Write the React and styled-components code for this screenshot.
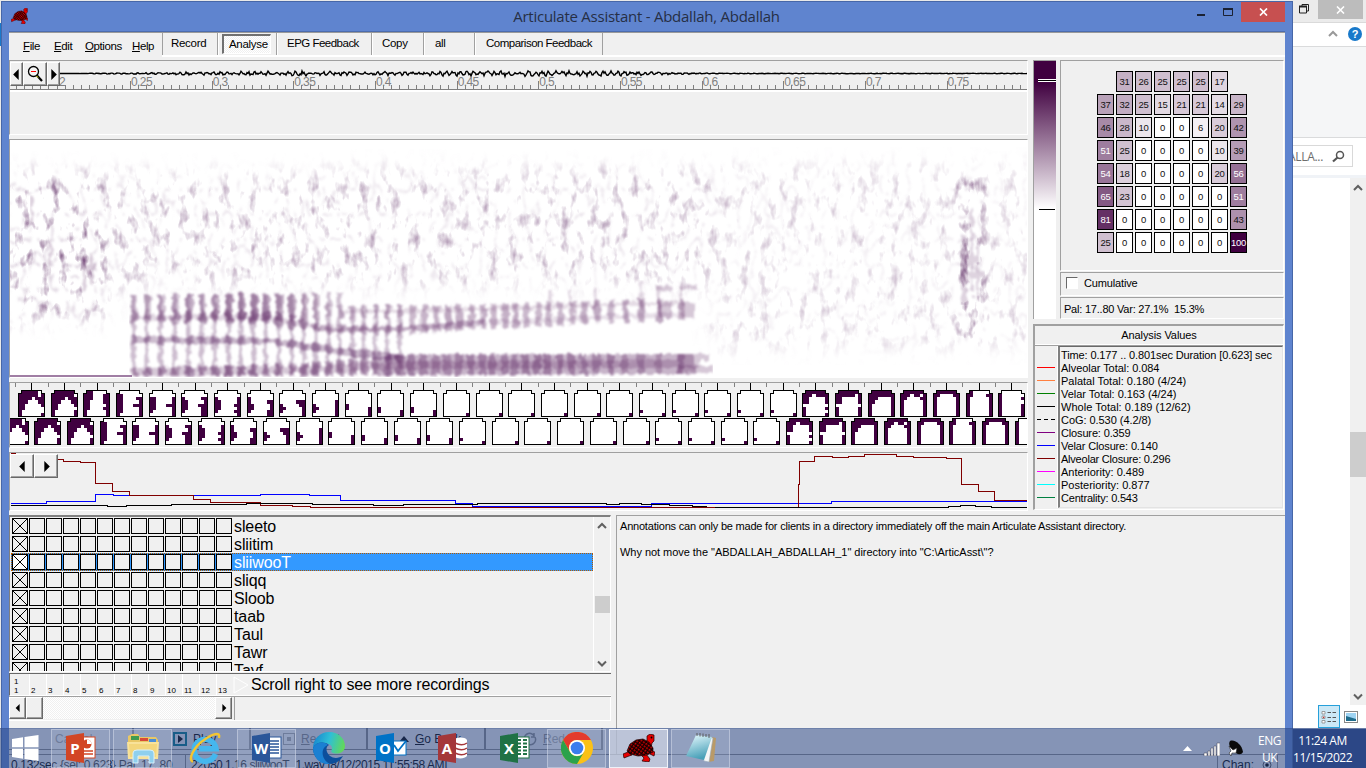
import React from "react";
import styled, { createGlobalStyle, css } from "styled-components";

const Global = createGlobalStyle`
  * { box-sizing: border-box; }
  html, body { margin: 0; padding: 0; overflow: hidden; }
  body { font-family: "Liberation Sans", Arial, sans-serif; font-size: 11px; color: #000; }
  svg { display: block; flex: none; }
`;

/* ---------- helpers ---------- */
const rng = (seed) => {
  let s = seed;
  return () => {
    s = (s * 1664525 + 1013904223) % 4294967296;
    return s / 4294967296;
  };
};
const lerp = (pts, x) => {
  if (x <= pts[0][0]) return pts[0][1];
  for (let i = 1; i < pts.length; i++) {
    if (x <= pts[i][0]) {
      const [x0, y0] = pts[i - 1];
      const [x1, y1] = pts[i];
      return y0 + ((y1 - y0) * (x - x0)) / (x1 - x0);
    }
  }
  return pts[pts.length - 1][1];
};

/* ---------- desktop and windows ---------- */
const Desktop = styled.div`
  position: relative;
  width: 1366px;
  height: 768px;
  overflow: hidden;
  background: #e9e9e9;
`;
const BackWindow = styled.div`
  position: absolute;
  left: 1293px;
  top: 0;
  width: 73px;
  height: 728px;
  background: #fff;
  display: flex;
  flex-direction: column;
`;
const BackTitle = styled.div`
  height: 23px;
  background: #ebebeb;
  border-bottom: 1px solid #dadada;
  display: flex;
  justify-content: space-between;
  padding: 0 3px 0 5px;
`;
const GreyClose = styled.div`
  width: 45px;
  height: 19px;
  background: #bcbcbc;
  display: flex;
  align-items: center;
  justify-content: center;
`;
const BackTabs = styled.div`
  height: 24px;
  border-bottom: 1px solid #dadbdc;
  display: flex;
  align-items: center;
  justify-content: flex-end;
  gap: 10px;
  padding-right: 4px;
`;
const BackRibbon = styled.div`
  height: 92px;
  background: #f5f6f7;
  border-bottom: 1px solid #dadbdc;
`;
const SearchRow = styled.div`
  height: 37px;
  padding: 7px 13px 8px 0;
`;
const SearchBox = styled.div`
  height: 22px;
  border: 1px solid #d9d9d9;
  border-left: 0;
  display: flex;
  align-items: center;
  justify-content: space-between;
  padding-right: 7px;
  font: 12px "Open Sans", sans-serif;
  letter-spacing: -0.3px;
  color: #6d6d6d;
  overflow: hidden;
`;
const SearchText = styled.span`
  margin-left: -5px;
`;
const BackBody = styled.div`
  flex: 1;
  border-top: 3px solid #f0f3f7;
  display: flex;
  flex-direction: column;
`;
const BackScroll = styled.div`
  align-self: flex-end;
  width: 16px;
  height: 527px;
  background: #f0f0f0;
  display: flex;
  flex-direction: column;
  align-items: center;
  justify-content: space-between;
  padding: 6px 0 4px;
`;
const BackThumb = styled.div`
  width: 16px;
  height: 45px;
  margin-top: 24px;
  background: #cdcdcd;
`;
const ViewRow = styled.div`
  display: flex;
  align-items: center;
  gap: 4px;
  padding-left: 25px;
`;
const ViewButton = styled.div`
  width: 22px;
  height: 23px;
  background: #cbe8f6;
  border: 1px solid #26a0da;
  display: flex;
  align-items: center;
  justify-content: center;
`;
const LeftSliver = styled.div`
  position: absolute;
  left: 0;
  top: 23px;
  width: 1px;
  height: 23px;
  background: #1979ca;
`;

const AppWindow = styled.div`
  position: absolute;
  left: 1px;
  top: 1px;
  width: 1292px;
  height: 767px;
  background: #5f84cf;
  border: 1px solid #4767a8;
  border-bottom: 0;
  padding: 0 7px;
`;
const TitleBar = styled.div`
  height: 30px;
  display: flex;
  position: relative;
  justify-content: center;
  border-bottom: 1px solid #4c6cae;
`;
const TitleText = styled.div`
  font: 15px/28px "Open Sans", sans-serif;
  color: #262f45;
  white-space: nowrap;
  letter-spacing: -0.25px;
  padding-right: 1px;
`;
const TitleIcon = styled.div`
  position: absolute;
  left: 2px;
  top: 6px;
`;
const WinButtons = styled.div`
  position: absolute;
  right: 0;
  top: 0;
  display: flex;
  gap: 3px;
`;
const CloseButton = styled.div`
  width: 44px;
  height: 20px;
  background: #c75050;
  display: flex;
  align-items: center;
  justify-content: center;
`;
const Client = styled.div`
  height: 736px;
  width: 1276px;
  background: #f0f0f0;
  border-top: 1px solid #9a9a9a;
  display: flex;
  flex-direction: column;
`;

/* ---------- menu ---------- */
const MenuBar = styled.div`
  height: 27px;
  flex: none;
  display: flex;
`;
const Menus = styled.div`
  width: 153px;
  padding: 6px 0 0 14px;
  display: flex;
  font-size: 11.5px;
  letter-spacing: -0.4px;
  line-height: 14px;
`;
const MenuItem = styled.span`
  width: ${(p) => p.$w}px;
  white-space: nowrap;
`;
const Tabs = styled.div`
  flex: 1;
  height: 24px;
  border-bottom: 2px solid #fff;
  display: flex;
`;
const Tab = styled.div`
  width: ${(p) => p.$w}px;
  height: 22px;
  border-left: 1px solid ${(p) => (p.$first ? "#a0a0a0" : "#fff")};
  border-right: 1px solid #a0a0a0;
  padding: ${(p) => (p.$down ? "1px 4px 0 3px" : `3px 0 0 ${p.$pad}px`)};
  font-size: 11.5px;
  letter-spacing: ${(p) => (p.$tight ? -0.51 : -0.3)}px;
  line-height: 15px;
  white-space: nowrap;
`;
const Pressed = styled.div`
  width: 49px;
  height: 20px;
  background: repeating-conic-gradient(#fff 0 25%, #f0f0f0 0 50%) 0 0 / 2px 2px;
  border: 1px solid #fff;
  border-top: 2px solid #707070;
  border-left: 2px solid #707070;
  padding: 1px 0 0 5px;
`;

/* ---------- work area ---------- */
const Upper = styled.div`
  height: 455px;
  flex: none;
  display: flex;
  gap: 5px;
`;
const LeftCol = styled.div`
  width: 1019px;
  display: flex;
  flex-direction: column;
`;
const Panel = styled.div`
  border-top: 1px solid #a0a0a0;
  border-left: 1px solid #a0a0a0;
  border-right: 1px solid #fff;
  border-bottom: 1px solid #fff;
  height: ${(p) => p.$h}px;
  margin-bottom: ${(p) => p.$gap || 0}px;
  background: ${(p) => p.$bg || "#f0f0f0"};
  overflow: hidden;
  flex: none;
  position: relative;
`;
const Overlay = styled.div`
  position: absolute;
  left: 0;
  top: ${(p) => p.$top}px;
  display: flex;
  background: #f0f0f0;
  z-index: 1;
`;
const PushButton = styled.div`
  width: ${(p) => p.$w}px;
  height: ${(p) => p.$h}px;
  background: #f0f0f0;
  border: 1px solid #fff;
  border-right-color: #696969;
  border-bottom-color: #696969;
  box-shadow: inset -1px -1px 0 #a0a0a0;
  display: flex;
  align-items: center;
  justify-content: center;
`;
const RightCol = styled.div`
  width: 251px;
  display: flex;
  flex-direction: column;
`;
const RightTop = styled.div`
  display: flex;
  gap: 4px;
  height: 260px;
  margin-bottom: 4px;
`;
const ColourBar = styled.div`
  width: 23px;
  height: 259px;
  border-top: 1px solid #a0a0a0;
  border-left: 1px solid #a0a0a0;
  background: linear-gradient(#400040 0 21px, #fff 148px);
  padding: 18px 0 0 4px;
`;
const BarHandle = styled.div`
  height: 3px;
  background: #000;
  border-top: 1px solid #fff;
  border-bottom: 1px solid #fff;
`;
const BarLine = styled.div`
  height: 1px;
  margin: 127px 1px 0 1px;
  background: #000;
`;
const RightStack = styled.div`
  width: 224px;
  display: flex;
  flex-direction: column;
`;
const EpgGrid = styled.div`
  display: grid;
  grid-template-columns: repeat(8, 17px);
  grid-auto-rows: 21px;
  gap: 2px;
  padding: 10px 0 0 36px;
`;
const EpgCell = styled.div`
  border: 1px solid #000;
  background: ${(p) => p.$bg};
  color: ${(p) => (p.$light ? "#fff" : "#111")};
  font-size: 9.5px;
  line-height: 19px;
  letter-spacing: -0.2px;
  text-align: center;
  display: flex;
  justify-content: center;
  white-space: nowrap;
`;
const CheckLine = styled.div`
  display: flex;
  align-items: center;
  gap: 6px;
  height: 20px;
  padding-left: 5px;
  letter-spacing: -0.15px;
`;
const CheckBox = styled.span`
  width: 12px;
  height: 12px;
  background: #fff;
  border: 1px solid #fff;
  border-top-color: #696969;
  border-left-color: #696969;
`;
const PalLine = styled.div`
  padding: 4px 0 0 3px;
  line-height: 14px;
  letter-spacing: -0.22px;
  white-space: pre;
`;
const Analysis = styled.div`
  height: 186px;
  border-top: 2px solid #a0a0a0;
  border-left: 2px solid #a0a0a0;
  border-right: 1px solid #fff;
  border-bottom: 1px solid #fff;
`;
const AnalysisTitle = styled.div`
  height: 19px;
  text-align: center;
  line-height: 19px;
  letter-spacing: -0.1px;
  border-bottom: 1px solid #fff;
`;
const AnalysisBody = styled.div`
  display: flex;
  height: 163px;
  border-top: 1px solid #a0a0a0;
`;
const Legend = styled.div`
  width: 23px;
  padding: 21px 0 0 2px;
  display: flex;
  flex-direction: column;
  gap: 12px;
  border-right: 1px solid #fff;
`;
const Swatch = styled.div`
  width: 18px;
  height: 1px;
  flex: none;
  background: ${(p) =>
    p.$dash ? "repeating-linear-gradient(90deg, #000 0 4px, transparent 4px 7px)" : p.$c};
`;
const Values = styled.div`
  flex: 1;
  border-top: 1px solid #696969;
  border-left: 2px solid #808080;
  border-right: 1px solid #e3e3e3;
  border-bottom: 1px solid #e3e3e3;
  padding: 2px 0 0 1px;
  line-height: 13px;
  white-space: nowrap;
`;
const ValueLine = styled.div`
  height: 13px;
  letter-spacing: ${(p) => p.$ls || 0}px;
`;

/* ---------- lower area ---------- */
const Lower = styled.div`
  height: 239px;
  flex: none;
  display: flex;
  gap: 5px;
`;
const ListSide = styled.div`
  width: 602px;
  display: flex;
  flex-direction: column;
`;
const ListBox = styled.div`
  height: 157px;
  border-top: 2px solid #808080;
  border-left: 1px solid #808080;
  border-right: 1px solid #fff;
  border-bottom: 1px solid #fff;
  padding-left: 1px;
  display: flex;
  overflow: hidden;
`;
const Rows = styled.div`
  width: 582px;
  overflow: hidden;
`;
const Row = styled.div`
  height: 18px;
  display: flex;
  align-items: center;
  background: ${(p) => (p.$on ? "#3399ff" : "none")};
  color: ${(p) => (p.$on ? "#fff" : "#000")};
  font-size: 16px;
  line-height: 18px;
  padding-left: 1px;
  ${(p) =>
    p.$on &&
    css`
      outline: 1px dotted #b35a00;
      outline-offset: -1px;
    `}
`;
const Tick = styled.span`
  width: 16px;
  height: 16px;
  margin-right: 1px;
  border: 1px solid #000;
  background: ${(p) => (p.$bright ? "#fff" : "#f0f0f0")};
  flex: none;
`;
const RowName = styled.span`
  padding: 1px 0 0 1px;
  letter-spacing: -0.1px;
  white-space: nowrap;
`;
const ListScroll = styled.div`
  width: 17px;
  border-left: 1px solid #fff;
  padding: 5px 0 3px;
  display: flex;
  flex-direction: column;
  justify-content: space-between;
  align-items: center;
`;
const ListThumb = styled.div`
  width: 15px;
  height: 17px;
  margin-top: 18px;
  background: #cdcdcd;
`;
const HeaderRow = styled.div`
  height: 23px;
  margin-top: 1px;
  border-top: 1px solid #696969;
  border-left: 1px solid #696969;
  border-bottom: 1px solid #fff;
  display: flex;
  padding-left: 2px;
`;
const HeaderCell = styled.div`
  width: 17px;
  border-left: 1px solid ${(p) => (p.$first ? "transparent" : "#fff")};
  font-size: 8px;
  line-height: 9px;
  display: flex;
  flex-direction: column;
  justify-content: flex-end;
  padding: 0 0 0 1px;
`;
const HeaderText = styled.div`
  display: flex;
  align-items: center;
  gap: 2px;
  font-size: 16px;
  line-height: 20px;
  letter-spacing: -0.15px;
  white-space: nowrap;
`;
const ScrollRow = styled.div`
  height: 25px;
  border-top: 1px solid #a0a0a0;
  border-bottom: 1px solid #fff;
  display: flex;
`;
const Track = styled.div`
  width: 172px;
  height: 22px;
  background: repeating-conic-gradient(#fff 0 25%, #f0f0f0 0 50%) 0 0 / 2px 2px;
`;
const ScrollTail = styled.div`
  margin-left: 2px;
  flex: 1;
  border-left: 1px solid #a0a0a0;
  border-right: 1px solid #fff;
`;
const Commands = styled.div`
  display: flex;
  margin-top: 7px;
  height: 22px;
`;
const Command = styled.div`
  width: ${(p) => p.$w}px;
  border-right: 2px solid #8a8a8a;
  border-bottom: 1px solid #8a8a8a;
  color: ${(p) => (p.$dim ? "#8d8d8d" : "#000")};
  padding-left: ${(p) => p.$pad}px;
  display: flex;
  align-items: center;
  gap: 6px;
  font-size: 12px;
  white-space: nowrap;
`;
const Notes = styled.div`
  flex: 1;
  border-top: 1px solid #a0a0a0;
  border-left: 1px solid #a0a0a0;
  padding: 4px 0 0 3px;
  line-height: 13px;
`;
const NoteLine = styled.p`
  margin: 0 0 13px;
  white-space: nowrap;
  letter-spacing: ${(p) => p.$ls}px;
`;
const Status = styled.div`
  flex: 1;
  border-top: 1px solid #8a8a8a;
  display: flex;
  font-size: 12px;
  line-height: 20px;
`;
const StatusPart = styled.div`
  width: ${(p) => p.$w}px;
  border-right: 1px solid #8a8a8a;
  padding-left: ${(p) => p.$pad || 2}px;
  letter-spacing: ${(p) => p.$ls || 0}px;
  white-space: nowrap;
  display: flex;
  align-items: center;
  gap: 8px;
`;

/* ---------- taskbar ---------- */
const Taskbar = styled.div`
  position: absolute;
  left: 0;
  top: 728px;
  width: 1366px;
  height: 40px;
  display: flex;
  background: rgba(44, 71, 134, 0.545);
  border-top: 1px solid rgba(44, 71, 134, 0.25);
`;
const TaskItem = styled.div`
  width: 59px;
  margin-right: 3px;
  height: 39px;
  padding-bottom: 2px;
  display: flex;
  align-items: center;
  justify-content: center;
  border: 1px solid
    ${(p) => (p.$state === "active" ? "#eef1f8" : p.$state === "open" ? "rgba(215,222,238,.5)" : "transparent")};
  background: ${(p) =>
    p.$state === "active" ? "rgba(225,228,238,.6)" : p.$state === "open" ? "rgba(200,208,228,.2)" : "none"};
`;
const StartButton = styled.div`
  width: 51px;
  padding: 6px 0 0 12px;
`;
const Tray = styled.div`
  margin-left: auto;
  width: 183px;
  display: flex;
  flex: none;
  color: #fff;
  font: 12px/17px "Open Sans", sans-serif;
`;
const TrayIcons = styled.div`
  display: flex;
  align-items: center;
  gap: 8px;
  width: 72px;
  flex: none;
`;
const TrayText = styled.div`
  width: ${(p) => p.$w}px;
  flex: none;
  height: 40px;
  padding: 3px ${(p) => p.$pr}px 0 0;
  text-align: center;
  white-space: nowrap;
  letter-spacing: ${(p) => p.$ls || 0}px;
  background: ${(p) => p.$bg || "none"};
`;

/* ---------- drawings ---------- */
const Arrow = ({ dir, size = 10 }) => {
  const d = { left: "M7 0V10L2 5Z", right: "M3 0V10L8 5Z", up: "M0 8H10L5 2Z" }[dir];
  return (
    <svg width={size} height={size} viewBox="0 0 10 10">
      <path d={d} />
    </svg>
  );
};
const Chevron = ({ down, c = "#606060" }) => (
  <svg width="10" height="8" viewBox="0 0 10 8">
    <path d={down ? "M1 1.5L5 5.5L9 1.5" : "M1 6L5 2L9 6"} fill="none" stroke={c} strokeWidth="2" />
  </svg>
);
const Turtle = ({ size, h, dark }) => (
  <svg width={size} height={h} viewBox="0 0 32 28" preserveAspectRatio="none">
    <defs>
      <pattern id={"shell" + size} width="3" height="3" patternUnits="userSpaceOnUse" patternTransform="rotate(35)">
        <rect width="3" height="3" fill={dark ? "#3a0000" : "#140000"} />
        <rect width="1.6" height="1.6" fill="#e00000" />
      </pattern>
    </defs>
    <g stroke="#200" strokeWidth=".7">
      <path d="M24 9L24 2L27 0L31 1L31 7L29 9L28 14L24 16Z" fill="#e60000" />
      <path d="M5 18L0 20L1 24L6 22L9 21Z" fill="#e60000" />
      <path d="M18 21L21 24L19 27L26 28L27 25L23 20Z" fill="#e60000" />
      <path d="M28 17L32 18L31 22L27 20Z" fill="#e60000" />
      <path d="M4 17L7 10L13 6L20 5L26 8L30 14L30 18L24 21L15 22L7 20Z" fill={`url(#shell${size})`} />
    </g>
    <circle cx="28.5" cy="3.5" r=".9" />
  </svg>
);

const Waveform = () => {
  const r = rng(7);
  const amp = [[60, 0], [88, 0.1], [95, 0.5], [120, 0.5], [165, 1], [230, 1.5], [300, 1.9], [400, 1.4], [440, 1.9], [570, 2.3], [620, 1.8], [660, 1.1], [700, 0.4], [730, 0.2], [1028, 0.2]];
  let wave = "M50 12.5";
  for (let x = 51; x < 1018; x += 1) {
    const a = lerp(amp, x + 10);
    const puls = Math.sin((x / 13) * 6.28 * 1.9) * 0.7;
    wave += `L${x} ${(12.5 + (puls + (r() - 0.5) * 1.5) * a).toFixed(1)}`;
  }
  const ticks = [];
  for (let i = -15; i < 110; i++) ticks.push(120.5 + i * 8.166);
  const labels = ["0.25", "0.3", "0.35", "0.4", "0.45", "0.5", "0.55", "0.6", "0.65", "0.7", "0.75"];
  return (
    <svg width="1018" height="73" viewBox="0 0 1018 73">
      <path d={wave} fill="none" stroke="#000" strokeWidth="1.4" />
      <g fill="#808080" shapeRendering="crispEdges">
        {ticks.map((x, i) => (
          <rect key={i} x={Math.round(x - 0.5)} y={i % 10 === 5 ? 20 : 24} width="1" height={i % 10 === 5 ? 8 : 4} />
        ))}
        <rect x="0" y="28" width="1018" height="1" />
        <rect x="0" y="29" width="1018" height="2" fill="#fff" />
      </g>
      <g fill="#808080" fontSize="12" letterSpacing="-.6">
        <text x="49" y="25">2</text>
        {labels.map((t, i) => (
          <text key={t} x={121 + i * 81.66} y="25">{t}</text>
        ))}
      </g>
    </svg>
  );
};

const Spectrogram = () => {
  const pulses = [133, 146, 160, 174, 188, 201, 214, 228, 240, 253, 265, 278, 291, 303, 315, 328, 339, 352, 363, 375, 387, 399, 411, 423, 435, 447, 458, 470, 482, 492, 504, 514, 525, 537, 547, 559, 571, 583, 596, 610, 624, 640, 658, 680];
  const yLow = [[133, 372], [300, 370], [400, 365], [680, 364]];
  const hLow = [[133, 5], [270, 6], [350, 8], [400, 11], [680, 10]];
  const yB = [[133, 340], [270, 341], [300, 345], [330, 350], [400, 358]];
  const yC = [[133, 317], [250, 317], [270, 318], [300, 324], [330, 329], [400, 329], [440, 326], [480, 323], [550, 320], [600, 317], [680, 315]];
  const yD = [[133, 300], [290, 301], [340, 312], [400, 311], [480, 309], [600, 305], [680, 303]];
  const aD = [[133, 0.22], [200, 0.38], [240, 0.46], [290, 0.46], [315, 0.26], [345, 0.18], [440, 0.24], [600, 0.3], [680, 0.3]];
  const aC = [[133, 0.2], [200, 0.3], [260, 0.38], [300, 0.4], [340, 0.25], [440, 0.2], [600, 0.16], [680, 0.2]];
  const aL = [[133, 0.35], [260, 0.5], [400, 0.38], [520, 0.42], [680, 0.36]];
  const r = rng(31);
  const band = (ys, from, to) =>
    "M" + Array.from({ length: Math.ceil((to - from) / 5) }, (_, i) => `${from + i * 5 - 10} ${lerp(ys, from + i * 5) - 140}`).join("L");
  return (
    <svg width="1018" height="237" viewBox="0 0 1018 237">
      <defs>
        <filter id="grain" x="0" y="0" width="100%" height="100%" colorInterpolationFilters="sRGB">
          <feTurbulence type="fractalNoise" baseFrequency=".1 .055" numOctaves="3" seed="12" />
          <feColorMatrix values="0 0 0 0 .48  0 0 0 0 .32  0 0 0 0 .5  3 0 0 0 -1.66" />
          <feGaussianBlur stdDeviation=".6" />
        </filter>
        <filter id="web" x="0" y="0" width="100%" height="100%" colorInterpolationFilters="sRGB">
          <feTurbulence type="turbulence" baseFrequency=".07 .04" numOctaves="2" seed="5" />
          <feColorMatrix values="0 0 0 0 .48  0 0 0 0 .32  0 0 0 0 .5  -3 0 0 0 .36" />
          <feGaussianBlur stdDeviation=".9" />
        </filter>
        <filter id="mottle" x="0" y="0" width="100%" height="100%" colorInterpolationFilters="sRGB">
          <feTurbulence type="fractalNoise" baseFrequency=".16 .14" numOctaves="2" seed="3" result="n" />
          <feDisplacementMap in="SourceGraphic" in2="n" scale="7" xChannelSelector="R" yChannelSelector="G" />
          <feGaussianBlur stdDeviation="1.1" />
        </filter>
        <filter id="wide" x="-20%" y="-20%" width="140%" height="140%">
          <feGaussianBlur stdDeviation="10" />
        </filter>
        <filter id="burstBlur" x="-60%" y="-20%" width="220%" height="140%">
          <feGaussianBlur stdDeviation="4" />
        </filter>
        <mask id="density" maskUnits="userSpaceOnUse" x="0" y="0" width="1018" height="237">
          <g filter="url(#wide)">
            <rect x="-20" y="34" width="118" height="145" fill="#c8c8c8" />
            <rect x="90" y="34" width="240" height="110" fill="#8c8c8c" />
            <rect x="320" y="30" width="390" height="114" fill="#848484" />
            <rect x="700" y="26" width="350" height="180" fill="#585858" />
            <rect x="15" y="90" width="70" height="60" fill="#fff" opacity=".4" />
          </g>
          <g filter="url(#burstBlur)">
            <rect x="948" y="40" width="27" height="160" fill="#c8c8c8" />
            <rect x="951" y="95" width="20" height="70" fill="#fff" />
          </g>
        </mask>
      </defs>
      <rect width="1018" height="237" fill="#fff" />
      <g mask="url(#density)">
        <rect width="1018" height="237" filter="url(#grain)" />
        <rect width="1018" height="237" filter="url(#web)" />
      </g>
      <g filter="url(#mottle)" fill="#5b2360">
        <path d="M952 95H957V165H952ZM960 70H963V150H960ZM966 100H969V160H966ZM953 115H970V122H953ZM958 132H975V138H958Z" opacity=".2" />
        <path d="M72 115H76V150H72ZM80 112H83V145H80ZM70 124H86V131H70ZM39 100H42V125H39ZM20 55H23V85H20Z" opacity=".22" />
      </g>
      <g filter="url(#mottle)" fill="#5b2360" stroke="#5b2360">
        <path d={band(yLow, 134, 700)} fill="none" strokeWidth="8" opacity=".25" />
        <path d={band(yLow, 380, 700)} fill="none" strokeWidth="20" opacity=".34" />
        <path d={band(yB, 134, 400)} fill="none" strokeWidth="6" opacity=".3" />
        <path d={band(yC, 134, 310)} fill="none" strokeWidth="5" opacity=".18" />
        <path d={band(yC, 310, 490)} fill="none" strokeWidth="5" opacity=".36" />
        <path d={band(yD, 340, 690)} fill="none" strokeWidth="4" opacity=".16" />
        <path d={band(yC, 490, 690)} fill="none" strokeWidth="5" opacity=".14" />
        <g stroke="none">
          {pulses.map((p, i) => {
            const x = p - 10;
            const late = p > 405;
            const j = r() * 0.1;
            const top = lerp(yD, p) - 140;
            const mid = lerp(yC, p) - 140;
            const low = lerp(yLow, p) - 140;
            const h = lerp(hLow, p);
            return (
              <React.Fragment key={i}>
                {!late && <rect x={x - 1.5} y={p < 340 ? 153 : 165} width="4" height={p < 340 ? 82 : 70} opacity=".3" />}
                {late && <rect x={x - 1.5} y={top - 5} width="6" height={mid - top + 11} opacity={0.3 + j} />}
                {p < 325 && <rect x={x - 2} y="154" width="7" height="27" opacity={lerp(aD, p) - j} />}
                {!late && p >= 325 && <rect x={x - 2} y={top - 6} width="6" height="13" opacity={lerp(aD, p)} />}
                {!late && <ellipse cx={x + 1} cy={mid} rx="4.5" ry={p < 300 ? 7 : 5} opacity={lerp(aC, p)} />}
                {!late && <ellipse cx={x + 1} cy={lerp(yB, p) - 140} rx="4.5" ry="4.5" opacity=".3" />}
                <rect x={x - 3} y={low - h} width={late ? 7 : 8} height={h * 2} opacity={lerp(aL, p) - j} />
              </React.Fragment>
            );
          })}
        </g>
        <path d="M646 148H663M670 147H688" fill="none" strokeWidth="5" opacity=".25" />
        <path d="M541 150V172M560 150V172M585 147V170M631 140V170M648 145V170M671 142V170" fill="none" strokeWidth="3" opacity=".2" />
        <path d="M668 217H700M668 229H703" fill="none" strokeWidth="6" opacity=".25" />
        <path d="M672 170H684M648 170H662" fill="none" strokeWidth="15" opacity=".25" />
      </g>
      <rect x="0" y="235" width="122" height="2" fill="#a07ea4" />
    </svg>
  );
};

/* electrode frames: eight rows of eight contacts, 1 = contact */
const F = {
  a: "01111100 11111101 11110111 11100011 11000001 11000000 10000000 10000001",
  b: "01111110 11111110 11110111 11100011 11000001 11000000 10000001 10000001",
  c: "01100000 11100011 11100011 11000011 11000001 11000011 10000001 10000001",
  d: "00000000 11000000 11000011 11000001 11000111 11000001 11000001 10000001",
  e: "00000000 00000000 11000001 11000001 11000111 11000001 10000001 00000001",
  f: "00000000 00000000 10000011 11000001 11000111 11000011 10000011 00000011",
  g: "00000000 00000000 10000001 11000001 11000011 11000001 10000011 00000001",
  h: "00000000 00000000 10000000 10000011 11000001 11000001 10000011 00000011",
  i: "00000000 00000000 00000000 00000111 10000011 11000001 10000001 00000001",
  j: "00000000 00000000 00000000 00000001 10000001 11000001 10000001 00000001",
  k: "00000000 00000000 00000000 00000000 10000000 10000001 00000001 00000001",
  l: "00000000 00000000 00000000 00000000 00000000 10000000 10000001 00000001",
  m: "00000000 00000000 00000000 00000000 00000000 00000000 00000000 00000001",
  n: "00000000 00000000 00000000 00000000 00000000 00000000 10000000 00000001",
  o: "01111110 11101111 11000001 11000001 00000000 10000001 10000000 10000001",
  p: "01111110 11111101 11000001 11000001 00000000 10000001 10000001 10000001",
  q: "01111110 11111111 11100001 11000001 10000001 10000001 10000001 10000001",
  r: "01111110 11101101 11000011 10000001 10000001 10000001 10000001 10000001",
  s: "01111110 11000011 10000001 10000001 10000001 10000001 10000001 10000001",
  t: "01000000 11000011 10000001 10000001 10000001 10000001 10000001 10000001",
  u: "00000000 10000000 10000001 10000000 10000001 10000001 10000001 10000001",
};
const topFrames = "abcdefghijkllmmmmmmnnnnnopqrstu".split("");
const bottomFrames = "abbdefghijklllnmmmmmnnnnopqrstsu".split("");

const Palate = ({ x, y, bits }) => (
  <g transform={`translate(${x} ${y})`}>
    <path d="M3.5 .5H23.5V3.5H26.5V26.5H.5V3.5H3.5Z" fill="#fff" stroke="none" />
    {bits.split(" ").flatMap((row, j) =>
      [...row].map((b, i) => {
        const x0 = Math.round(1 + i * 3.125);
        const y0 = Math.round(1 + j * 3.125);
        return b === "1" ? (
          <rect key={`${i}-${j}`} x={x0} y={y0} width={Math.round(4.125 + i * 3.125) - x0} height={Math.round(4.125 + j * 3.125) - y0} fill="#400040" />
        ) : null;
      })
    )}
    <path d="M3.5 .5H23.5V3.5H26.5V26.5H.5V3.5H3.5Z" fill="none" stroke="#000" />
  </g>
);
const Palates = () => (
  <svg width="1018" height="64" viewBox="0 0 1018 64" shapeRendering="crispEdges">
    {Array.from({ length: 63 }, (_, i) => {
      const x = Math.round(5 + i * 16.335);
      return <rect key={i} x={x} y="0" width="1" height={i % 2 ? 7 : 4} fill={i % 2 ? "#000" : "#808080"} />;
    })}
    {topFrames.map((f, i) => (
      <Palate key={i} x={Math.round(8 + i * 32.68)} y={7} bits={F[f]} />
    ))}
    {bottomFrames.map((f, i) => (
      <Palate key={i} x={Math.round(-8.4 + i * 32.68)} y={35} bits={F[f]} />
    ))}
  </svg>
);

const Traces = () => (
  <svg width="1018" height="57" viewBox="10 453 1018 57" shapeRendering="crispEdges" fill="none">
    <path transform="translate(.5 .5)" stroke="#0000ff" d="M10 503H46V501H95V494H113V495H260V494H309V495H340V500H455V503H472V506H651V503H831V501H1028" />
    <path transform="translate(.5 .5)" stroke="#800000" d="M10 453H15M57 459H63V461H80V462H95V483H112V491H129V495H193V499H210V502H260V505H292V506H310V507H798V484H799V461H814V456H832V457H848V456H864V454H896V456H913V457H946V458H961V484H978V491H994V500H1028" />
    <path transform="translate(.5 .5)" stroke="#000" d="M10 505H107V506H126V505H171V504H246V503H312V504H373V505H403V504H477V503H606V504H619V503H641V504H669V505H692V506H706M714 507H948V506H960V505H975V506H991V507H1028" />
  </svg>
);

const Office = ({ c, letter, kind }) => (
  <svg width="32" height="32" viewBox="0 0 32 32">
    {kind !== "mail" && kind !== "db" && <rect x="15" y="5" width="15" height="21" fill="#fff" stroke={c} />}
    {kind === "ppt" && (
      <g>
        <circle cx="22" cy="12" r="4.5" fill={c} />
        <path d="M22 12V7.500A4.500 4.500 0 0 1 26.500 12Z" fill="#fff" />
        <path d="M18 19H28M18 22H28" stroke={c} strokeWidth="1.6" />
      </g>
    )}
    {kind === "doc" && <path d="M18 9H28M18 12H28M18 15H28M18 18H28M18 21H28" stroke={c} strokeWidth="1.4" />}
    {kind === "mail" && (
      <g>
        <rect x="17" y="9" width="14" height="14" fill="#fff" stroke={c} />
        <path d="M19 13L23 19L31 9" stroke={c} strokeWidth="1.8" fill="none" />
      </g>
    )}
    {kind === "db" && (
      <g>
        <path d="M18 7C21 5 28 5 30 8V24C28 27 20 27 18 25Z" fill="#fff" />
        <path d="M18 11C22 13 27 13 30 11M18 16C22 18 27 18 30 16M18 21C22 23 27 23 30 21" stroke={c} strokeWidth="1.5" fill="none" />
      </g>
    )}
    {kind === "xls" && <path d="M19 8H22M24 8H28M19 11.500H22M24 11.500H28M19 15H22M24 15H28M19 18.500H22M24 18.500H28M19 22H22M24 22H28" stroke={c} strokeWidth="1.8" />}
    <path d="M1 4L19 1V31L1 28Z" fill={c} />
    <text x="10" y="21.500" textAnchor="middle" fontSize="15" fontWeight="bold" fill="#fff" fontFamily="Open Sans, sans-serif">{letter}</text>
  </svg>
);
const Explorer = () => (
  <svg width="34" height="32" viewBox="0 0 34 32">
    <path d="M2 4L6 2H12L14 5H30L32 8V26H2Z" fill="#e8c766" />
    <path d="M5 4H13V8H5Z" fill="#3f9b4f" />
    <path d="M14 6H22V9H14Z" fill="#d84a38" />
    <path d="M23 7H30V10H23Z" fill="#4b8fd6" />
    <path d="M1 10H33L32 27H2Z" fill="#f8e29a" />
    <path d="M3 12H31L30 25H4Z" fill="#f3d67c" />
    <path d="M7 21Q7 18 11 18H24Q28 18 28 21V31H23V24H12V31H7Z" fill="#8fd0ee" stroke="#d9f1fb" />
  </svg>
);
const IE = () => (
  <svg width="34" height="34" viewBox="0 0 34 34">
    <path d="M27.500 23A11 11 0 1 1 28 17.700H11" fill="none" stroke="#45b7ee" strokeWidth="5.500" />
    <path d="M5 31C-1 28 7 15 16 9C24 3 33 0 31 7" fill="none" stroke="#f4c531" strokeWidth="2.400" />
  </svg>
);
const Edge = () => (
  <svg width="34" height="34" viewBox="0 0 34 34">
    <defs>
      <linearGradient id="edgeTop" x1="0" x2="1" y1=".3" y2=".5">
        <stop offset="0" stopColor="#1786cf" />
        <stop offset=".5" stopColor="#2fbfd6" />
        <stop offset="1" stopColor="#62d85a" />
      </linearGradient>
    </defs>
    <path d="M1 17C1 8 8 1 17 1C27 1 33 8 33 15C33 21 27 24 21 22C18 21 20 19 20 17C20 12 8 9 1 20Z" fill="url(#edgeTop)" />
    <path d="M1 17C4 11 12 10 17 14C13 16 14 22 18 25C22 28 27 27 31 25C27 33 17 35 9 31C4 28 1 23 1 17Z" fill="#0c4f9c" />
    <path d="M1 17C4 11 12 10 16 14C9 16 8 28 18 33C8 34 1 26 1 17Z" fill="#1b80d2" />
  </svg>
);
const Chrome = () => (
  <svg width="32" height="32" viewBox="0 0 32 32">
    <circle cx="16" cy="16" r="16" fill="#fbc116" />
    <path d="M2.100 8A16 16 0 0 1 29.900 8H16A8 8 0 0 0 9 20Z" fill="#e33b2e" />
    <path d="M2.100 8A16 16 0 0 0 16 32L23 20A8 8 0 0 1 9 20Z" fill="#2ba24c" />
    <circle cx="16" cy="16" r="8" fill="#fff" />
    <circle cx="16" cy="16" r="6.300" fill="#3b7ded" />
  </svg>
);
const Notepad = () => (
  <svg width="32" height="32" viewBox="0 0 32 32">
    <defs>
      <linearGradient id="pad" x2=".3" y2="1">
        <stop stopColor="#e9fbff" />
        <stop offset="1" stopColor="#48a0b8" />
      </linearGradient>
    </defs>
    <path d="M27 5L31 6L29 29L23 30Z" fill="#b99a68" />
    <path d="M11 3L28 6L24 30L19 29Z" fill="#f4f6f6" stroke="#9ab" strokeWidth=".6" />
    <path d="M11 3L27 5L19 28L1 24Z" fill="url(#pad)" />
    <path d="M12 1V4M15 1V4.500M18 1.500V5M21 2V5M24 2V6" stroke="#555" strokeWidth=".9" />
  </svg>
);

/* ---------- data ---------- */
const epg = [
  [null, 31, 26, 25, 25, 25, 17, null],
  [37, 32, 25, 15, 21, 21, 14, 29],
  [46, 28, 10, 0, 0, 6, 20, 42],
  [51, 25, 0, 0, 0, 0, 10, 39],
  [54, 18, 0, 0, 0, 0, 20, 56],
  [65, 23, 0, 0, 0, 0, 0, 51],
  [81, 0, 0, 0, 0, 0, 0, 43],
  [25, 0, 0, 0, 0, 0, 0, 100],
];
const shade = (v) => {
  const m = (a) => Math.round(255 + ((a - 255) * v) / 100);
  return `rgb(${m(64)},${m(0)},${m(64)})`;
};
const legend = ["#ff0000", "#ff8040", "#008000", "#000", "dash", "#800080", "#0000ff", "#800000", "#ff00ff", "#00ffff", "#008040"];
const values = [
  ["Alveolar Total: 0.084", -0.05],
  ["Palatal Total: 0.180 (4/24)", 0],
  ["Velar Total: 0.163 (4/24)", -0.05],
  ["Whole Total: 0.189 (12/62)", 0.03],
  ["CoG: 0.530 (4.2/8)", -0.05],
  ["Closure: 0.359", -0.15],
  ["Velar Closure: 0.140", -0.15],
  ["Alveolar Closure: 0.296", -0.22],
  ["Anteriority: 0.489", 0],
  ["Posteriority: 0.877", 0],
  ["Centrality: 0.543", -0.2],
];
const words = ["sleeto", "sliitim", "sliiwooT", "sliqq", "Sloob", "taab", "Taul", "Tawr", "Tayf"];
const tasks = [
  ["open", <Office c="#d24625" letter="P" kind="ppt" />],
  ["open", <Explorer />],
  ["", <IE />],
  ["open", <Office c="#2a5699" letter="W" kind="doc" />],
  ["", <Edge />],
  ["", <Office c="#0072c6" letter="O" kind="mail" />],
  ["", <Office c="#a4373a" letter="A" kind="db" />],
  ["", <Office c="#207245" letter="X" kind="xls" />],
  ["open", <Chrome />],
  ["active", <Turtle size={32} h={28} />],
  ["open", <Notepad />],
];

const Menu = ({ w, k, rest }) => (
  <MenuItem $w={w}>
    <u>{k}</u>
    {rest}
  </MenuItem>
);

export default function App() {
  return (
    <Desktop>
      <Global />
      <LeftSliver />
      <BackWindow>
        <BackTitle>
          <svg width="12" height="16" viewBox="0 0 12 16">
            <path d="M1.500 6.500H8.500V13H1.500ZM4 6V4.500H10.500V11H9" fill="none" stroke="#222" />
            <path d="M1 6.500H9" stroke="#222" strokeWidth="2" />
          </svg>
          <GreyClose>
            <svg width="9" height="8" viewBox="0 0 9 8">
              <path d="M1 .5L8 7.500M8 .5L1 7.500" stroke="#fff" strokeWidth="1.600" />
            </svg>
          </GreyClose>
        </BackTitle>
        <BackTabs>
          <Chevron c="#999" />
          <svg width="14" height="14" viewBox="0 0 14 14">
            <circle cx="7" cy="7" r="7" fill="#1979ca" />
            <text x="7" y="11" textAnchor="middle" fontSize="11" fontWeight="bold" fill="#fff">?</text>
          </svg>
        </BackTabs>
        <BackRibbon />
        <SearchRow>
          <SearchBox>
            <SearchText>ALLA...</SearchText>
            <svg width="13" height="13" viewBox="0 0 13 13">
              <circle cx="8" cy="5" r="3.500" fill="none" stroke="#555" strokeWidth="1.500" />
              <path d="M5.500 7.500L1 11.500" stroke="#555" strokeWidth="2.200" />
            </svg>
          </SearchBox>
        </SearchRow>
        <BackBody>
          <BackScroll>
            <Chevron />
            <BackThumb />
            <Chevron down />
          </BackScroll>
          <ViewRow>
            <ViewButton>
              <svg width="16" height="14" viewBox="0 0 16 14">
                <path d="M1 1.500H4V4H1ZM1 6H4V8.500H1ZM1 10.500H4V13H1Z" fill="#fff" stroke="#888" strokeWidth=".8" />
                <path d="M6.500 2.500H10M11.500 2.500H15M6.500 7.500H10M11.500 7.500H15M6.500 11.500H10M11.500 11.500H15" stroke="#555" />
                <path d="M2 6.700H3.300V8H2Z" fill="#c33" />
              </svg>
            </ViewButton>
            <svg width="14" height="12" viewBox="0 0 14 12">
              <rect x=".5" y=".5" width="13" height="11" fill="#fff" stroke="#888" />
              <rect x="2" y="2" width="10" height="8" fill="#9fd4f3" />
              <path d="M2 5L12 8V10H2Z" fill="#1f6c8c" />
            </svg>
          </ViewRow>
        </BackBody>
      </BackWindow>

      <AppWindow>
        <TitleBar>
          <TitleIcon>
            <Turtle size={17} h={16} dark />
          </TitleIcon>
          <TitleText>Articulate Assistant - Abdallah, Abdallah</TitleText>
          <WinButtons>
            <svg width="45" height="20" viewBox="0 0 45 20">
              <path d="M4 12H12V14H4Z" fill="#1b2233" />
              <path d="M30.500 7.500H39.500V13.500H30.500Z" fill="none" stroke="#1b2233" />
              <path d="M30 7H40" stroke="#1b2233" strokeWidth="2" />
            </svg>
            <CloseButton>
              <svg width="9" height="8" viewBox="0 0 9 8">
                <path d="M1 .5L8 7.500M8 .5L1 7.500" stroke="#fff" strokeWidth="1.700" />
              </svg>
            </CloseButton>
          </WinButtons>
        </TitleBar>
        <Client>
          <MenuBar>
            <Menus>
              <Menu w={31} k="F" rest="ile" />
              <Menu w={31} k="E" rest="dit" />
              <Menu w={47} k="O" rest="ptions" />
              <Menu w={25} k="H" rest="elp" />
            </Menus>
            <Tabs>
              <Tab $w={56} $pad={8} $first>Record</Tab>
              <Tab $w={59} $down>
                <Pressed>Analyse</Pressed>
              </Tab>
              <Tab $w={95} $pad={9} $tight>EPG Feedback</Tab>
              <Tab $w={52} $pad={9}>Copy</Tab>
              <Tab $w={51} $pad={10}>all</Tab>
              <Tab $w={128} $pad={10} $tight>Comparison Feedback</Tab>
            </Tabs>
          </MenuBar>

          <Upper>
            <LeftCol>
              <Panel $h={75} $gap={4}>
                <Overlay $top={1}>
                  <PushButton $w={13} $h={24}><Arrow dir="left" size={11} /></PushButton>
                  <PushButton $w={24} $h={24}>
                    <svg width="18" height="18" viewBox="0 0 18 18">
                      <circle cx="7.500" cy="6.500" r="5" fill="#f4f4f4" stroke="#000" strokeWidth="1.300" />
                      <path d="M5 6H10V7H5Z" fill="#f00" />
                      <path d="M11 10.500L16 16" stroke="#000" strokeWidth="2.200" />
                      <path d="M10.500 11L12 12.500" stroke="#ff0" />
                    </svg>
                  </PushButton>
                  <PushButton $w={13} $h={24}><Arrow dir="right" size={11} /></PushButton>
                </Overlay>
                <Waveform />
              </Panel>
              <Panel $h={239} $gap={4} $bg="#fff">
                <Spectrogram />
              </Panel>
              <Panel $h={66} $gap={4}>
                <Palates />
              </Panel>
              <Panel $h={59}>
                <Overlay $top={1}>
                  <PushButton $w={24} $h={24}><Arrow dir="left" size={11} /></PushButton>
                  <PushButton $w={24} $h={24}><Arrow dir="right" size={11} /></PushButton>
                </Overlay>
                <Traces />
              </Panel>
            </LeftCol>

            <RightCol>
              <RightTop>
                <ColourBar>
                  <BarHandle />
                  <BarLine />
                </ColourBar>
                <RightStack>
                  <Panel $h={211} $gap={1}>
                    <EpgGrid>
                      {epg.flat().map((v, i) =>
                        v === null ? (
                          <span key={i} />
                        ) : (
                          <EpgCell key={i} $bg={shade(v)} $light={v > 50}>{v}</EpgCell>
                        )
                      )}
                    </EpgGrid>
                  </Panel>
                  <Panel $h={24} $gap={1}>
                    <CheckLine>
                      <CheckBox />
                      Cumulative
                    </CheckLine>
                  </Panel>
                  <Panel $h={22}>
                    <PalLine>Pal: 17..80 Var: 27.1%  15.3%</PalLine>
                  </Panel>
                </RightStack>
              </RightTop>
              <Analysis>
                <AnalysisTitle>Analysis Values</AnalysisTitle>
                <AnalysisBody>
                  <Legend>
                    {legend.map((c) => (
                      <Swatch key={c} $c={c} $dash={c === "dash"} />
                    ))}
                  </Legend>
                  <Values>
                    <ValueLine $ls={-0.12}>Time: 0.177 .. 0.801sec Duration [0.623] sec</ValueLine>
                    {values.map(([v, ls]) => (
                      <ValueLine key={v} $ls={ls}>{v}</ValueLine>
                    ))}
                  </Values>
                </AnalysisBody>
              </Analysis>
            </RightCol>
          </Upper>

          <Lower>
            <ListSide>
              <ListBox>
                <Rows>
                  {words.map((w) => (
                    <Row key={w} $on={w === "sliiwooT"}>
                      {Array.from({ length: 13 }, (_, i) => (
                        <Tick key={i} $bright={i === 0 && w === "sliiwooT"}>
                          {i === 0 && (
                            <svg width="14" height="14" viewBox="0 0 14 14">
                              <path d="M0 0L14 14M14 0L0 14" stroke="#000" />
                            </svg>
                          )}
                        </Tick>
                      ))}
                      <RowName>{w}</RowName>
                    </Row>
                  ))}
                </Rows>
                <ListScroll>
                  <Chevron />
                  <ListThumb />
                  <Chevron down />
                </ListScroll>
              </ListBox>
              <HeaderRow>
                {Array.from({ length: 13 }, (_, i) => (
                  <HeaderCell key={i} $first={i === 0}>
                    {i === 0 && <span>1</span>}
                    <span>{i + 1}</span>
                  </HeaderCell>
                ))}
                <HeaderText>
                  <svg width="16" height="18" viewBox="0 0 16 18">
                    <path d="M1 1L15 9L1 17Z" fill="none" stroke="#fff" />
                  </svg>
                  Scroll right to see more recordings
                </HeaderText>
              </HeaderRow>
              <ScrollRow>
                <PushButton $w={17} $h={22}><Arrow dir="left" size={8} /></PushButton>
                <PushButton $w={17} $h={22} />
                <Track />
                <PushButton $w={17} $h={22}><Arrow dir="right" size={8} /></PushButton>
                <ScrollTail />
              </ScrollRow>
              <Commands>
                <Command $w={125} $pad={46} $dim>Cancel</Command>
                <Command $w={117} $pad={39}>
                  <svg width="14" height="14" viewBox="0 0 14 14">
                    <rect x="1" y="1" width="12" height="12" fill="none" stroke="#00788c" strokeWidth="2" />
                    <path d="M5 3L10 7L5 11Z" />
                  </svg>
                  <span><u>P</u>lay</span>
                </Command>
                <Command $w={117} $pad={32} $dim>
                  <svg width="12" height="12"><rect x=".5" y=".5" width="11" height="11" fill="none" stroke="#8d8d8d" /><rect x="4" y="4" width="4" height="4" fill="#8d8d8d" /></svg>
                  <span><u>R</u>ecord</span>
                </Command>
                <Command $w={118} $pad={31}>
                  <Arrow dir="up" size={10} />
                  <span><u>G</u>o Back</span>
                </Command>
                <Command $w={117} $pad={37} $dim>
                  <svg width="14" height="14" viewBox="0 0 14 14"><path d="M2 9A5 5 0 0 1 11 4M12 5A5 5 0 0 1 3 10M11 1V5H8M3 13V10H6" fill="none" stroke="#8d8d8d" strokeWidth="1.500" /></svg>
                  <span><u>R</u>edo</span>
                </Command>
              </Commands>
            </ListSide>
            <Notes>
              <NoteLine $ls={-0.205}>
                Annotations can only be made for clients in a directory immediately off the main Articulate Assistant directory.
              </NoteLine>
              <NoteLine $ls={-0.04}>Why not move the "ABDALLAH_ABDALLAH_1" directory into "C:\ArticAsst\"?</NoteLine>
            </Notes>
          </Lower>
          <Status>
            <StatusPart $w={177} $ls={-0.35}>0.132sec {"{sel: 0.623}"} Pal: 17..80</StatusPart>
            <StatusPart $w={1032} $pad={5} $ls={-0.45}>22050 1.16 sliiwooT_1.wav [8/12/2015 11:55:58 AM]</StatusPart>
            <StatusPart $w={60} $pad={4}>
              Chan:
              <svg width="10" height="10"><circle cx="5" cy="5" r="4" fill="none" stroke="#555" /><circle cx="5" cy="5" r="1.800" /></svg>
            </StatusPart>
          </Status>
        </Client>
      </AppWindow>

      <Taskbar>
        <StartButton>
          <svg width="27" height="26" viewBox="0 0 27 26">
            <path d="M0 4L11 2.300V12.300H0ZM12.500 2L26.500 0V12.300H12.500ZM0 13.700H11V23.700L0 22ZM12.500 13.700H26.500V26L12.500 24Z" fill="#fff" />
          </svg>
        </StartButton>
        {tasks.map(([state, icon], i) => (
          <TaskItem key={i} $state={state}>{icon}</TaskItem>
        ))}
        <Tray>
          <TrayIcons>
            <svg width="9" height="5" viewBox="0 0 9 5"><path d="M4.500 0L9 5H0Z" fill="#fff" /></svg>
            <svg width="20" height="14" viewBox="-4 0 20 14">
              <path d="M0 11H3V14H0ZM4 9H6V14H4ZM7 6H9V14H7ZM10 4H12V14H10ZM13 1H16V14H13Z" fill="#fff" stroke="#445" strokeWidth=".5" />
            </svg>
            <svg width="18" height="17" viewBox="1 0 18 17">
              <path d="M3 1C8 -1 15 5 16 12C14 16 9 14 6 11C3 8 1 4 3 1Z" fill="#0a0a0a" />
              <path d="M2 6L6 10L10 8L9 13L5 13L4 16L2 13L4 11Z" fill="#fff" stroke="#222" strokeWidth=".6" />
            </svg>
          </TrayIcons>
          <TrayText $w={38} $ls={-0.5} $pr={9}>ENG<br />UK</TrayText>
          <TrayText $w={73} $bg="#2c4786" $ls={-0.45} $pr={14}>11:24 AM<br />11/15/2022</TrayText>
        </Tray>
      </Taskbar>
    </Desktop>
  );
}
